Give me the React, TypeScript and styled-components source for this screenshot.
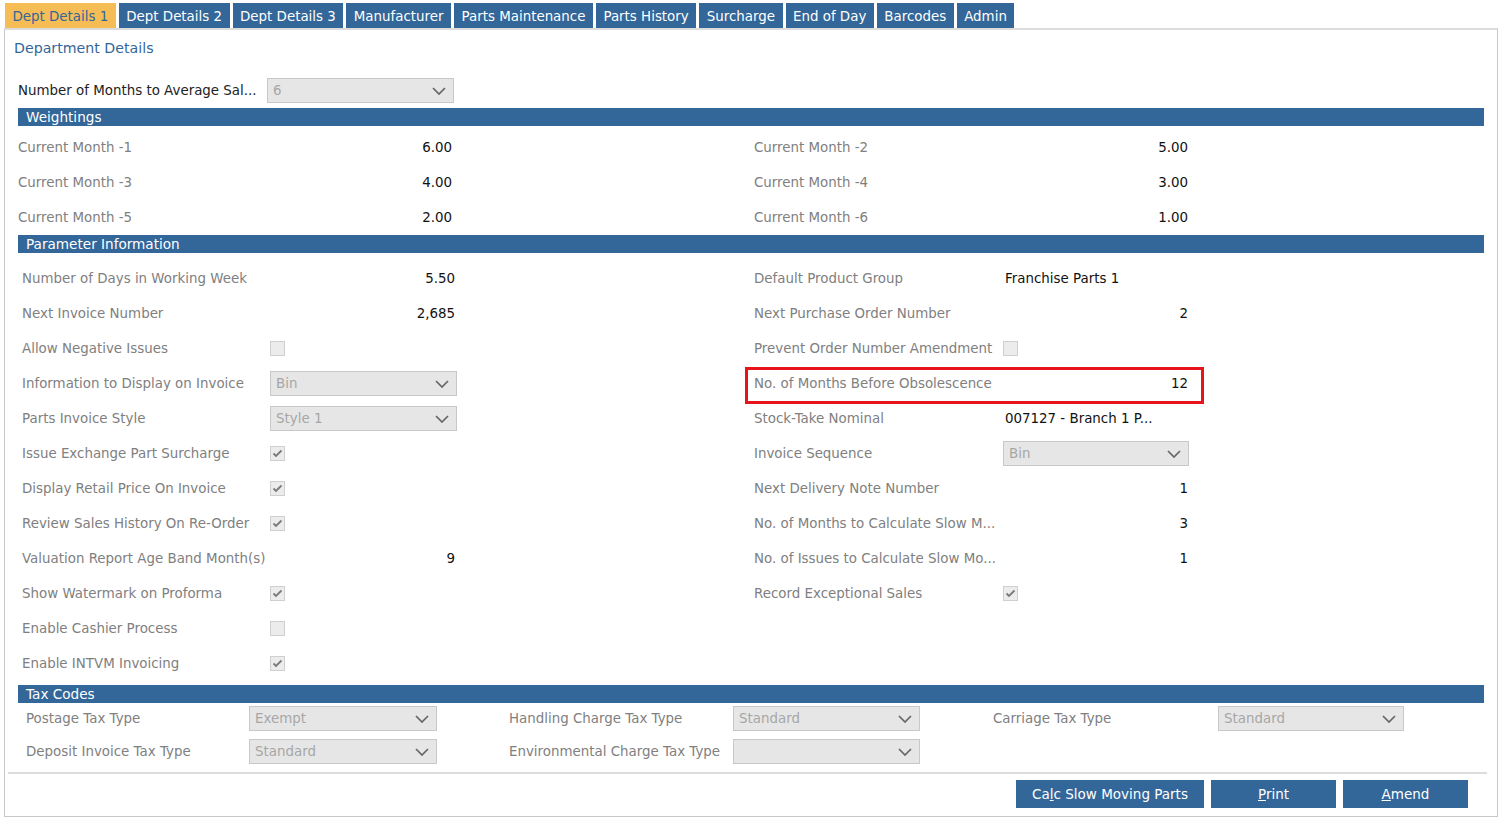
import { Fragment } from "react"
import styled, { createGlobalStyle } from "styled-components"

const Global = createGlobalStyle`
    body {
        margin: 0;
        background: #fff;
        font-family: "DejaVu Sans", Tahoma, sans-serif;
        font-size: 13.4px;
        color: #222;
    }
`

const BLUE = "#336699"

const Page = styled.div`
    width: 1502px;
    height: 821px;
    padding: 3px 4px 0 4px;
    box-sizing: border-box;
    display: flex;
    flex-direction: column;
`

const Tabs = styled.div`
    display: flex;
    gap: 3px;
    padding-left: 1px;
    height: 25px;
`

const Tab = styled.div<{ active?: boolean }>`
    display: flex;
    align-items: center;
    padding: 1px 7.5px 0 7.5px;
    font-size: 13.4px;
    background: ${p => p.active ? "#f6bd57" : BLUE};
    color: ${p => p.active ? BLUE : "#fff"};
    white-space: nowrap;
`

const Panel = styled.div`
    width: 1494px;
    height: 789px;
    box-sizing: border-box;
    border: 1px solid #c8c8c8;
    border-top: 2px solid #dcdcdc;
    display: flex;
    flex-direction: column;
`

const Title = styled.div`
    color: ${BLUE};
    font-size: 14.2px;
    padding: 10px 0 0 9px;
    height: 30px;
    box-sizing: border-box;
`

const Body = styled.div`
    padding: 0 13px;
`

const AvgRow = styled.div`
    display: flex;
    align-items: center;
    height: 25px;
    margin-top: 18px;
    margin-bottom: 5px;
`

const AvgLabel = styled.div`
    width: 249px;
    color: #222;
`

const SectionBar = styled.div`
    background: ${BLUE};
    color: #fff;
    height: 18px;
    line-height: 18px;
    padding-left: 8px;
    font-size: 13.6px;
`

const WeightGrid = styled.div`
    display: grid;
    grid-template-columns: 250px 184px 302px 250px 184px;
    grid-auto-rows: 35px;
    margin-top: 4px;
`

const ParamGrid = styled.div`
    display: grid;
    grid-template-columns: 248px 187px 297px 249px 186px;
    grid-auto-rows: 35px;
    padding-left: 4px;
    margin-top: 8px;
    margin-bottom: 4px;
`

const TaxGrid = styled.div`
    display: grid;
    grid-template-columns: 223px 188px 72px 224px 187px 73px 225px 186px;
    grid-auto-rows: 33px;
    padding-left: 8px;
    margin-top: -1px;
`

const Label = styled.div`
    display: flex;
    align-items: center;
    color: #808080;
    white-space: nowrap;
    overflow: hidden;
`

const Value = styled.div<{ left?: boolean }>`
    display: flex;
    align-items: center;
    justify-content: ${p => p.left ? "flex-start" : "flex-end"};
    padding-left: ${p => p.left ? "2px" : "0"};
    color: #111;
    white-space: nowrap;
`

const Cell = styled.div`
    display: flex;
    align-items: center;
`

const Spacer = styled.div``

const Highlight = styled.div`
    grid-column: 4 / span 2;
    display: grid;
    grid-template-columns: 249px 186px;
    position: relative;
    &::after {
        content: "";
        position: absolute;
        left: -9px;
        right: -15px;
        top: 1px;
        bottom: -3px;
        border: 3px solid #e8141b;
        pointer-events: none;
    }
`

const SelectBox = styled.div<{ w?: number }>`
    width: ${p => p.w ?? 187}px;
    height: 25px;
    box-sizing: border-box;
    background: #e6e6e6;
    border: 1px solid #c8c8c8;
    display: flex;
    align-items: center;
    justify-content: space-between;
    padding: 0 7px 0 5px;
    color: #a6a6a6;
    font-size: 13.4px;
`

const Check = styled.div`
    width: 15px;
    height: 15px;
    box-sizing: border-box;
    background: #ececec;
    border: 1px solid #cfcfcf;
    display: flex;
    align-items: center;
    justify-content: center;
`

const Divider = styled.div`
    height: 2px;
    background: #dcdcdc;
    margin: 4px 10px 0 3px;
`

const ButtonBar = styled.div`
    display: flex;
    justify-content: flex-end;
    gap: 7px;
    padding-right: 29px;
    margin-top: 6px;
`

const Button = styled.div<{ w: number }>`
    width: ${p => p.w}px;
    height: 28px;
    background: ${BLUE};
    color: #fff;
    display: flex;
    align-items: center;
    justify-content: center;
    font-size: 13.5px;
`

const Chevron = () => (
    <svg width="14" height="8" viewBox="0 0 14 8">
        <polyline points="1,1 7,7 13,1" fill="none" stroke="#666" strokeWidth="1.7" />
    </svg>
)

const Select = ({ text, w }: { text: string; w?: number }) => (
    <SelectBox w={w}>
        <span>{text}</span>
        <Chevron />
    </SelectBox>
)

const CheckBox = ({ checked }: { checked?: boolean }) => (
    <Check>
        {checked && (
            <svg width="11" height="9" viewBox="0 0 11 9">
                <polyline points="1.5,4.5 4,7 9.5,1.5" fill="none" stroke="#7a7a7a" strokeWidth="1.8" />
            </svg>
        )}
    </Check>
)

const tabs = ["Dept Details 1", "Dept Details 2", "Dept Details 3", "Manufacturer", "Parts Maintenance", "Parts History", "Surcharge", "End of Day", "Barcodes", "Admin"]

const weightings = [
    ["Current Month -1", "6.00", "Current Month -2", "5.00"],
    ["Current Month -3", "4.00", "Current Month -4", "3.00"],
    ["Current Month -5", "2.00", "Current Month -6", "1.00"],
]

type Ctrl = { kind: "value"; v: string; left?: boolean } | { kind: "check"; v: boolean } | { kind: "select"; v: string } | { kind: "none" }

const params: [string, Ctrl, string, Ctrl][] = [
    ["Number of Days in Working Week", { kind: "value", v: "5.50" }, "Default Product Group", { kind: "value", v: "Franchise Parts 1", left: true }],
    ["Next Invoice Number", { kind: "value", v: "2,685" }, "Next Purchase Order Number", { kind: "value", v: "2" }],
    ["Allow Negative Issues", { kind: "check", v: false }, "Prevent Order Number Amendment", { kind: "check", v: false }],
    ["Information to Display on Invoice", { kind: "select", v: "Bin" }, "No. of Months Before Obsolescence", { kind: "value", v: "12" }],
    ["Parts Invoice Style", { kind: "select", v: "Style 1" }, "Stock-Take Nominal", { kind: "value", v: "007127 - Branch 1 P...", left: true }],
    ["Issue Exchange Part Surcharge", { kind: "check", v: true }, "Invoice Sequence", { kind: "select", v: "Bin" }],
    ["Display Retail Price On Invoice", { kind: "check", v: true }, "Next Delivery Note Number", { kind: "value", v: "1" }],
    ["Review Sales History On Re-Order", { kind: "check", v: true }, "No. of Months to Calculate Slow M...", { kind: "value", v: "3" }],
    ["Valuation Report Age Band Month(s)", { kind: "value", v: "9" }, "No. of Issues to Calculate Slow Mo...", { kind: "value", v: "1" }],
    ["Show Watermark on Proforma", { kind: "check", v: true }, "Record Exceptional Sales", { kind: "check", v: true }],
    ["Enable Cashier Process", { kind: "check", v: false }, "", { kind: "none" }],
    ["Enable INTVM Invoicing", { kind: "check", v: true }, "", { kind: "none" }],
]

const renderCtrl = (c: Ctrl, pad: number) => {
    switch (c.kind) {
        case "value":
            return <Value left={c.left} style={{ paddingRight: c.left ? 0 : pad }}>{c.v}</Value>
        case "check":
            return <Cell><CheckBox checked={c.v} /></Cell>
        case "select":
            return <Cell><Select text={c.v} /></Cell>
        default:
            return <Spacer />
    }
}

const taxes = [
    ["Postage Tax Type", "Exempt", "Handling Charge Tax Type", "Standard", "Carriage Tax Type", "Standard"],
    ["Deposit Invoice Tax Type", "Standard", "Environmental Charge Tax Type", "", "", null],
]

export default () => {
    return (
        <Fragment>
            <Global />
            <Page>
                <Tabs>
                    {tabs.map((t, i) => <Tab key={t} active={i === 0}>{t}</Tab>)}
                </Tabs>
                <Panel>
                    <Title>Department Details</Title>
                    <Body>
                        <AvgRow>
                            <AvgLabel>Number of Months to Average Sal...</AvgLabel>
                            <Select text="6" w={187} />
                        </AvgRow>
                        <SectionBar>Weightings</SectionBar>
                        <WeightGrid>
                            {weightings.map(r => (
                                <Fragment key={r[0]}>
                                    <Label>{r[0]}</Label>
                                    <Value>{r[1]}</Value>
                                    <Spacer />
                                    <Label>{r[2]}</Label>
                                    <Value>{r[3]}</Value>
                                </Fragment>
                            ))}
                        </WeightGrid>
                        <SectionBar>Parameter Information</SectionBar>
                        <ParamGrid>
                            {params.map(([l1, c1, l2, c2]) => (
                                <Fragment key={l1}>
                                    <Label>{l1}</Label>
                                    {renderCtrl(c1, 2)}
                                    <Spacer />
                                    {l2.startsWith("No. of Months Before") ? (
                                        <Highlight>
                                            <Label>{l2}</Label>
                                            {renderCtrl(c2, 1)}
                                        </Highlight>
                                    ) : (
                                        <Fragment>
                                            <Label>{l2}</Label>
                                            {renderCtrl(c2, 1)}
                                        </Fragment>
                                    )}
                                </Fragment>
                            ))}
                        </ParamGrid>
                        <SectionBar>Tax Codes</SectionBar>
                        <TaxGrid>
                            {taxes.map(r => (
                                <Fragment key={r[0]}>
                                    <Label>{r[0]}</Label>
                                    <Cell><Select text={r[1] as string} w={188} /></Cell>
                                    <Spacer />
                                    <Label>{r[2]}</Label>
                                    <Cell><Select text={r[3] as string} w={187} /></Cell>
                                    <Spacer />
                                    <Label>{r[4]}</Label>
                                    {r[5] !== null ? <Cell><Select text={r[5] as string} w={186} /></Cell> : <Spacer />}
                                </Fragment>
                            ))}
                        </TaxGrid>
                    </Body>
                    <Divider />
                    <ButtonBar>
                        <Button w={188}><span>Ca<u>l</u>c Slow Moving Parts</span></Button>
                        <Button w={125}><span><u>P</u>rint</span></Button>
                        <Button w={125}><span><u>A</u>mend</span></Button>
                    </ButtonBar>
                </Panel>
            </Page>
        </Fragment>
    )
}
